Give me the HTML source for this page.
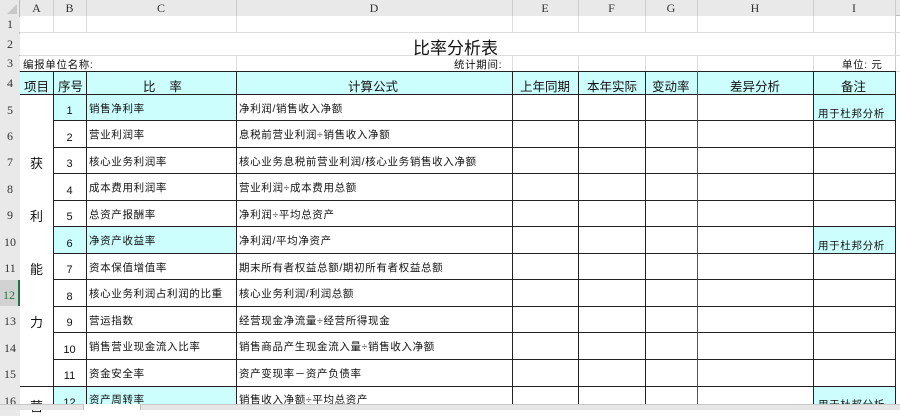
<!DOCTYPE html><html><head><meta charset="utf-8"><style>
*{margin:0;padding:0;box-sizing:border-box}
body{width:900px;height:410px;overflow:hidden;background:#fff;font-family:"Liberation Sans","Noto Sans CJK SC",sans-serif;position:relative;font-size:11px;color:#111}
.a{position:absolute}
.h{background:#e9e9e9;color:#333;font-family:"Liberation Serif","Noto Serif CJK SC",serif;font-size:12px;text-align:center}
.c{position:absolute;white-space:nowrap;overflow:visible}
.t .c{letter-spacing:0.65px}
</style></head><body>
<div class="a h" style="left:0;top:0;width:900px;height:16px;border-bottom:1px solid #bbb"></div>
<div class="a h" style="left:0;top:0;width:20px;height:410px;border-right:1px solid #bbb"></div>
<svg class="a" style="left:6px;top:4px" width="12" height="11"><polygon points="11,0 11,10 1,10" fill="#c8c8c8"/></svg>
<div class="a h" style="left:20px;top:1px;width:33px">A</div>
<div class="a h" style="left:53px;top:1px;width:33px">B</div>
<div class="a h" style="left:86px;top:1px;width:150px">C</div>
<div class="a h" style="left:236px;top:1px;width:276px">D</div>
<div class="a h" style="left:512px;top:1px;width:66px">E</div>
<div class="a h" style="left:578px;top:1px;width:67px">F</div>
<div class="a h" style="left:645px;top:1px;width:52px">G</div>
<div class="a h" style="left:697px;top:1px;width:116px">H</div>
<div class="a h" style="left:813px;top:1px;width:82px">I</div>
<div class="a" style="left:53px;top:0;width:1px;height:16px;background:#ccc"></div>
<div class="a" style="left:86px;top:0;width:1px;height:16px;background:#ccc"></div>
<div class="a" style="left:236px;top:0;width:1px;height:16px;background:#ccc"></div>
<div class="a" style="left:512px;top:0;width:1px;height:16px;background:#ccc"></div>
<div class="a" style="left:578px;top:0;width:1px;height:16px;background:#ccc"></div>
<div class="a" style="left:645px;top:0;width:1px;height:16px;background:#ccc"></div>
<div class="a" style="left:697px;top:0;width:1px;height:16px;background:#ccc"></div>
<div class="a" style="left:813px;top:0;width:1px;height:16px;background:#ccc"></div>
<div class="a" style="left:895px;top:0;width:1px;height:410px;background:#ccc"></div>
<div class="a h" style="left:0;top:17px;width:20px;line-height:15px">1</div>
<div class="a h" style="left:0;top:34px;width:20px;line-height:21px">2</div>
<div class="a h" style="left:0;top:56px;width:20px;line-height:15px">3</div>
<div class="a h" style="left:0;top:72px;width:20px;line-height:22px">4</div>
<div class="a h" style="left:0;top:94px;width:20px;line-height:32px">5</div>
<div class="a h" style="left:0;top:121px;width:20px;line-height:30px">6</div>
<div class="a h" style="left:0;top:147px;width:20px;line-height:30px">7</div>
<div class="a h" style="left:0;top:174px;width:20px;line-height:30px">8</div>
<div class="a h" style="left:0;top:200px;width:20px;line-height:30px">9</div>
<div class="a h" style="left:0;top:227px;width:20px;line-height:30px">10</div>
<div class="a h" style="left:0;top:253px;width:20px;line-height:30px">11</div>
<div class="a h" style="left:0;top:280px;width:20px;line-height:30px;color:#217346;background:#d2d2d2;border-right:2px solid #217346">12</div>
<div class="a h" style="left:0;top:306px;width:20px;line-height:30px">13</div>
<div class="a h" style="left:0;top:333px;width:20px;line-height:30px">14</div>
<div class="a h" style="left:0;top:359px;width:20px;line-height:30px">15</div>
<div class="a h" style="left:0;top:386px;width:20px;line-height:30px">16</div>
<div class="a" style="left:20px;top:32px;width:880px;height:1px;background:#ddd"></div>
<div class="a" style="left:20px;top:55px;width:880px;height:1px;background:#ddd"></div>
<div class="a" style="left:20px;top:71px;width:880px;height:1px;background:#ddd"></div>
<div class="a" style="left:53px;top:16px;width:1px;height:16px;background:#ddd"></div>
<div class="a" style="left:86px;top:16px;width:1px;height:16px;background:#ddd"></div>
<div class="a" style="left:236px;top:16px;width:1px;height:16px;background:#ddd"></div>
<div class="a" style="left:236px;top:55px;width:1px;height:16px;background:#ddd"></div>
<div class="a" style="left:512px;top:16px;width:1px;height:16px;background:#ddd"></div>
<div class="a" style="left:512px;top:55px;width:1px;height:16px;background:#ddd"></div>
<div class="a" style="left:578px;top:16px;width:1px;height:16px;background:#ddd"></div>
<div class="a" style="left:578px;top:55px;width:1px;height:16px;background:#ddd"></div>
<div class="a" style="left:645px;top:16px;width:1px;height:16px;background:#ddd"></div>
<div class="a" style="left:645px;top:55px;width:1px;height:16px;background:#ddd"></div>
<div class="a" style="left:697px;top:16px;width:1px;height:16px;background:#ddd"></div>
<div class="a" style="left:697px;top:55px;width:1px;height:16px;background:#ddd"></div>
<div class="a" style="left:813px;top:16px;width:1px;height:16px;background:#ddd"></div>
<div class="a" style="left:813px;top:55px;width:1px;height:16px;background:#ddd"></div>
<div class="c" style="left:413px;top:34px;font-size:17px">比率分析表</div>
<div class="t">
<div class="c" style="left:23px;top:57px;font-size:10.5px">编报单位名称:</div>
<div class="c" style="left:454px;top:57px;font-size:10.5px">统计期间:</div>
<div class="c" style="left:842px;top:57px;font-size:10.5px">单位: 元</div>
</div>
<div class="a" style="left:20px;top:71px;width:875px;height:23px;background:#ccfefe"></div>
<div class="a" style="left:53px;top:94px;width:183px;height:27px;background:#ccfefe"></div>
<div class="a" style="left:813px;top:94px;width:82px;height:27px;background:#ccfefe"></div>
<div class="a" style="left:53px;top:227px;width:183px;height:26px;background:#ccfefe"></div>
<div class="a" style="left:813px;top:227px;width:82px;height:26px;background:#ccfefe"></div>
<div class="a" style="left:53px;top:386px;width:183px;height:24px;background:#ccfefe"></div>
<div class="a" style="left:813px;top:386px;width:82px;height:24px;background:#ccfefe"></div>
<div class="a" style="left:20px;top:71px;width:876px;height:1px;background:#222"></div>
<div class="a" style="left:20px;top:94px;width:876px;height:1px;background:#222"></div>
<div class="a" style="left:53px;top:120px;width:843px;height:1px;background:#222"></div>
<div class="a" style="left:53px;top:147px;width:843px;height:1px;background:#222"></div>
<div class="a" style="left:53px;top:173px;width:843px;height:1px;background:#222"></div>
<div class="a" style="left:53px;top:200px;width:843px;height:1px;background:#222"></div>
<div class="a" style="left:53px;top:226px;width:843px;height:1px;background:#222"></div>
<div class="a" style="left:53px;top:253px;width:843px;height:1px;background:#222"></div>
<div class="a" style="left:53px;top:279px;width:843px;height:1px;background:#222"></div>
<div class="a" style="left:53px;top:306px;width:843px;height:1px;background:#222"></div>
<div class="a" style="left:53px;top:332px;width:843px;height:1px;background:#222"></div>
<div class="a" style="left:53px;top:359px;width:843px;height:1px;background:#222"></div>
<div class="a" style="left:20px;top:386px;width:876px;height:1px;background:#222"></div>
<div class="a" style="left:53px;top:71px;width:1px;height:339px;background:#222"></div>
<div class="a" style="left:86px;top:71px;width:1px;height:339px;background:#222"></div>
<div class="a" style="left:236px;top:71px;width:1px;height:339px;background:#222"></div>
<div class="a" style="left:512px;top:71px;width:1px;height:339px;background:#222"></div>
<div class="a" style="left:578px;top:71px;width:1px;height:339px;background:#222"></div>
<div class="a" style="left:645px;top:71px;width:1px;height:339px;background:#222"></div>
<div class="a" style="left:697px;top:71px;width:1px;height:339px;background:#555"></div>
<div class="a" style="left:813px;top:71px;width:1px;height:339px;background:#222"></div>
<div class="a" style="left:895px;top:71px;width:1px;height:339px;background:#222"></div>
<div style="font-size:12.5px">
<div class="c" style="left:24px;top:76px">项目</div>
<div class="c" style="left:58px;top:76px">序号</div>
<div class="c" style="left:143px;top:76px">比&nbsp;&nbsp;&nbsp;&nbsp;率</div>
<div class="c" style="left:348px;top:76px">计算公式</div>
<div class="c" style="left:520px;top:76px">上年同期</div>
<div class="c" style="left:587px;top:76px">本年实际</div>
<div class="c" style="left:652px;top:76px">变动率</div>
<div class="c" style="left:730px;top:76px">差异分析</div>
<div class="c" style="left:841px;top:76px">备注</div>
</div>
<div style="font-size:13px">
<div class="c" style="left:30px;top:153px">获</div>
<div class="c" style="left:30px;top:206px">利</div>
<div class="c" style="left:30px;top:259px">能</div>
<div class="c" style="left:30px;top:312px">力</div>
<div class="c" style="left:30px;top:396px">营</div>
</div>
<div style="font-size:11px">
<div class="c" style="left:53px;width:33px;text-align:center;top:105px">1</div>
<div class="c" style="left:53px;width:33px;text-align:center;top:132px">2</div>
<div class="c" style="left:53px;width:33px;text-align:center;top:158px">3</div>
<div class="c" style="left:53px;width:33px;text-align:center;top:185px">4</div>
<div class="c" style="left:53px;width:33px;text-align:center;top:211px">5</div>
<div class="c" style="left:53px;width:33px;text-align:center;top:238px">6</div>
<div class="c" style="left:53px;width:33px;text-align:center;top:264px">7</div>
<div class="c" style="left:53px;width:33px;text-align:center;top:291px">8</div>
<div class="c" style="left:53px;width:33px;text-align:center;top:317px">9</div>
<div class="c" style="left:53px;width:33px;text-align:center;top:344px">10</div>
<div class="c" style="left:53px;width:33px;text-align:center;top:370px">11</div>
<div class="c" style="left:53px;width:33px;text-align:center;top:397px">12</div>
</div>
<div class="t" style="font-size:10.5px">
<div class="c" style="left:89px;top:101px">销售净利率</div><div class="c" style="left:239px;top:101px">净利润/销售收入净额</div>
<div class="c" style="left:89px;top:127px">营业利润率</div><div class="c" style="left:239px;top:127px">息税前营业利润÷销售收入净额</div>
<div class="c" style="left:89px;top:154px">核心业务利润率</div><div class="c" style="left:239px;top:154px">核心业务息税前营业利润/核心业务销售收入净额</div>
<div class="c" style="left:89px;top:180px">成本费用利润率</div><div class="c" style="left:239px;top:180px">营业利润÷成本费用总额</div>
<div class="c" style="left:89px;top:207px">总资产报酬率</div><div class="c" style="left:239px;top:207px">净利润÷平均总资产</div>
<div class="c" style="left:89px;top:233px">净资产收益率</div><div class="c" style="left:239px;top:233px">净利润/平均净资产</div>
<div class="c" style="left:89px;top:260px">资本保值增值率</div><div class="c" style="left:239px;top:260px">期末所有者权益总额/期初所有者权益总额</div>
<div class="c" style="left:89px;top:286px">核心业务利润占利润的比重</div><div class="c" style="left:239px;top:286px">核心业务利润/利润总额</div>
<div class="c" style="left:89px;top:313px">营运指数</div><div class="c" style="left:239px;top:313px">经营现金净流量÷经营所得现金</div>
<div class="c" style="left:89px;top:339px">销售营业现金流入比率</div><div class="c" style="left:239px;top:339px">销售商品产生现金流入量÷销售收入净额</div>
<div class="c" style="left:89px;top:366px">资金安全率</div><div class="c" style="left:239px;top:366px">资产变现率－资产负债率</div>
<div class="c" style="left:89px;top:392px">资产周转率</div><div class="c" style="left:239px;top:392px">销售收入净额÷平均总资产</div>
<div class="c" style="left:818px;top:106px">用于杜邦分析</div>
<div class="c" style="left:818px;top:238px">用于杜邦分析</div>
<div class="c" style="left:818px;top:397px">用于杜邦分析</div>
</div>
<div class="a" style="left:0;top:404px;width:900px;height:6px;background:#e6e6e6;border-top:1px solid #c8c8c8"></div>
<div class="a" style="left:83px;top:404px;width:58px;height:6px;background:#fff;border-left:1px solid #bbb;border-right:1px solid #bbb"></div>
</body></html>
